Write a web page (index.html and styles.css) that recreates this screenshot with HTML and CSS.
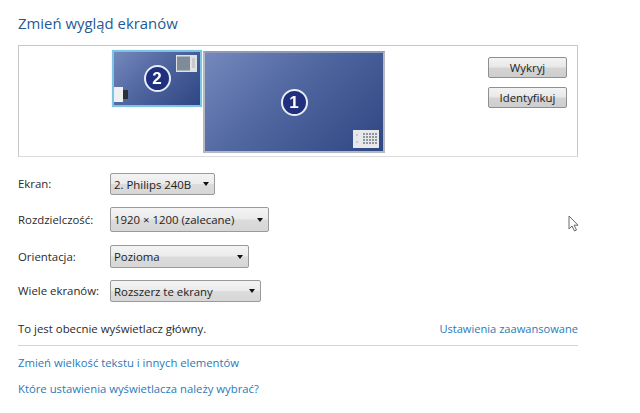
FILE: index.html
```html
<!DOCTYPE html>
<html lang="pl">
<head>
<meta charset="utf-8">
<title>Zmień wygląd ekranów</title>
<link rel="stylesheet" href="styles.css">
</head>
<body>
<main class="page">
  <h1 class="title">Zmień wygląd ekranów</h1>
  <section class="preview">
    <div class="canvas">
      <div class="monitor small">
        <span class="badge">2</span>
        <svg class="win win-top" viewBox="0 0 21 17"><rect width="21" height="17" fill="#dfe2e5"/><rect x="1" y="1.500" width="13" height="14" fill="#7f8b96"/><rect x="16" y="3" width="3" height="10" fill="#c6cacd"/></svg>
        <svg class="win win-left" viewBox="0 0 14 15"><rect x="8" y="3" width="6" height="9" fill="#2c3038"/><rect width="9" height="15" fill="#eef0f2"/></svg>
      </div>
      <div class="monitor large">
        <span class="badge">1</span>
        <svg class="win win-grid" viewBox="0 0 26 18">
          <rect width="26" height="18" fill="#e6e8ea"/>
          <g fill="#8f959c">
            <rect x="10" y="3" width="2" height="2"/><rect x="13" y="3" width="2" height="2"/><rect x="16" y="3" width="2" height="2"/><rect x="19" y="3" width="2" height="2"/><rect x="22" y="3" width="2" height="2"/>
            <rect x="10" y="6" width="2" height="2"/><rect x="13" y="6" width="2" height="2"/><rect x="16" y="6" width="2" height="2"/><rect x="19" y="6" width="2" height="2"/><rect x="22" y="6" width="2" height="2"/>
            <rect x="10" y="9" width="2" height="2"/><rect x="13" y="9" width="2" height="2"/><rect x="16" y="9" width="2" height="2"/><rect x="19" y="9" width="2" height="2"/><rect x="22" y="9" width="2" height="2"/>
            <rect x="10" y="12" width="2" height="2"/><rect x="13" y="12" width="2" height="2"/><rect x="16" y="12" width="2" height="2"/><rect x="19" y="12" width="2" height="2"/><rect x="22" y="12" width="2" height="2"/>
          </g>
          <g fill="#c4c8cc"><rect x="3" y="4" width="2" height="2"/><rect x="3" y="11" width="2" height="2"/></g>
        </svg>
      </div>
    </div>
    <div class="actions">
      <button class="btn">Wykryj</button>
      <button class="btn">Identyfikuj</button>
    </div>
  </section>
  <section class="form">
    <div class="row r1"><span class="label">Ekran:</span><div class="select w1"><span>2. Philips 240B</span><i class="arrow"></i></div></div>
    <div class="row r2"><span class="label">Rozdzielczość:</span><div class="select w2"><span>1920 × 1200 (zalecane)</span><i class="arrow"></i></div></div>
    <div class="row r3"><span class="label">Orientacja:</span><div class="select w3"><span>Pozioma</span><i class="arrow"></i></div></div>
    <div class="row r4"><span class="label">Wiele ekranów:</span><div class="select w4"><span>Rozszerz te ekrany</span><i class="arrow"></i></div></div>
  </section>
  <div class="status"><span>To jest obecnie wyświetlacz główny.</span><a class="link side">Ustawienia zaawansowane</a></div>
  <hr class="rule">
  <p class="para"><a class="link">Zmień wielkość tekstu i innych elementów</a></p>
  <p class="para"><a class="link">Które ustawienia wyświetlacza należy wybrać?</a></p>
</main>
<svg class="cursor" viewBox="0 0 12 18"><path d="M1 1v13l3-3 2.500 5 2-1-2.400-4.800H10z" fill="#fff" stroke="#6a6a6a" stroke-width="1"/></svg>
</body>
</html>
```
FILE: styles.css
```css
* { box-sizing: border-box; }
html, body { margin: 0; height: 413px; overflow: hidden; background: #fff; }
body { font-family: "Open Sans", "Noto Sans", sans-serif; font-size: 11.4px; color: #2a2a2a; }
.page { padding: 14px 62px 0 18px; width: 640px; }
.title { margin: 0; height: 31px; font-size: 14.900px; line-height: 18px; font-weight: 400; color: #1f5a94; }
.preview { display: flex; justify-content: space-between; height: 112px; border: 1px solid #c8c8c8; border-bottom-color: #dcdcdc; }
.canvas { position: relative; flex: 1; }
.monitor { position: absolute; display: flex; align-items: center; justify-content: center; background: linear-gradient(135deg, #7488bc 0%, #50669f 45%, #2f4684 100%); filter: blur(0.4px); }
.small { left: 93px; top: 4px; width: 90px; height: 57px; border: 2px solid #7cc4e4; box-shadow: 0 0 1px #a9dcef; }
.large { left: 184px; top: 5px; width: 182px; height: 102px; border: 2px solid #b4b8bf; border-top-color: #8e9bb8; }
.badge { width: 27px; height: 27px; border-radius: 50%; border: 2px solid #e8ecf6; background: #20307e; color: #fff; font: 700 17px/23px "Liberation Sans", sans-serif; text-align: center; }
.win { position: absolute; display: block; }
.win-top { right: 3px; top: 3px; width: 21px; height: 17px; }
.win-left { left: 0; bottom: 3px; width: 14px; height: 15px; }
.win-grid { right: 4px; bottom: 3px; width: 26px; height: 18px; }
.actions { display: flex; flex-direction: column; gap: 9px; width: 79px; margin: 11px 10px 0 0; }
.btn { height: 21px; padding: 0; border: 1px solid #8f8f8f; border-radius: 2px; background: linear-gradient(#f3f3f3 0%, #e8e8e8 48%, #d4d4d4 52%, #cecece 100%); font: 11.4px/17px "Open Sans", sans-serif; color: #222; }
.form { display: flex; flex-direction: column; margin-top: 16px; }
.row { display: flex; align-items: center; }
.r2 { margin-top: 12px; }
.r3 { margin-top: 13px; }
.r4 { margin-top: 12px; }
.label { width: 92px; padding-bottom: 1px; }
.select { display: flex; align-items: center; justify-content: space-between; padding: 0 5px 0 3px; height: 22px; border: 1px solid #9a9a9a; border-radius: 2px; background: linear-gradient(#f4f4f4 0%, #ebebeb 48%, #dcdcdc 52%, #d6d6d6 100%); color: #222; }
.w1 { width: 105px; }
.w2 { width: 159px; height: 25px; }
.w3 { width: 139px; height: 23px; }
.w4 { width: 151px; }
.arrow { width: 0; height: 0; border: 3.500px solid transparent; border-top: 4px solid #111; border-bottom: 0; }
.status { display: flex; justify-content: space-between; margin-top: 19px; height: 15px; line-height: 15px; }
.link { color: #2a7ab8; }
.side { font-size: 11.100px; }
.rule { margin: 9px 0 0; border: 0; height: 1px; background: #d4d4d4; }
.para { margin: 9px 0 0; height: 15px; line-height: 15px; font-size: 11.300px; }
.para + .para { margin-top: 11px; }
.cursor { position: absolute; left: 568px; top: 215px; width: 12px; height: 18px; }
```
